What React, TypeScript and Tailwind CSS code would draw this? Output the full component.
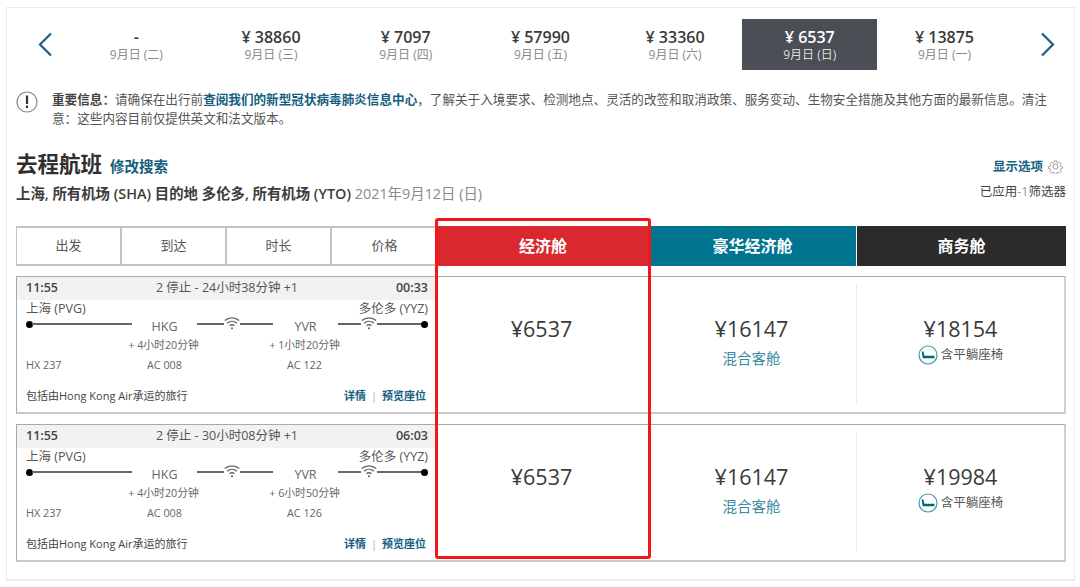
import React from "react";

const FONT = "font-['Open_Sans','Noto_Sans_CJK_SC',sans-serif]";

const dates = [
  { price: "-", day: "9月日 (二)" },
  { price: "¥ 38860", day: "9月日 (三)" },
  { price: "¥ 7097", day: "9月日 (四)" },
  { price: "¥ 57990", day: "9月日 (五)" },
  { price: "¥ 33360", day: "9月日 (六)" },
  { price: "¥ 6537", day: "9月日 (日)", active: true },
  { price: "¥ 13875", day: "9月日 (一)" },
];

const flights = [
  { summary: "2 停止 - 24小时38分钟 +1", arrive: "00:33", layover: "+ 1小时20分钟", last: "AC 122", business: "¥18154" },
  { summary: "2 停止 - 30小时08分钟 +1", arrive: "06:03", layover: "+ 6小时50分钟", last: "AC 126", business: "¥19984" },
];

function Chevron({ right }: { right?: boolean }) {
  return (
    <svg width="15" height="25" viewBox="0 0 15 25" fill="none" stroke="#1c5f80" strokeWidth="2.2">
      <path d={right ? "M2 1.500 13 12.500 2 23.500" : "M13 1.500 2 12.500 13 23.500"} />
    </svg>
  );
}

function Wifi() {
  return (
    <svg width="16" height="14" viewBox="0 0 16 14" fill="none" stroke="#666" strokeWidth="1.4" className="shrink-0 mb-[3px]">
      <path d="M.8 4.600C4.800 1 11.200 1 15.200 4.600" />
      <path d="M3.200 7.100c2.800-2.300 6.800-2.300 9.600 0" />
      <path d="M5.600 9.600c1.400-1 3.400-1 4.800 0" />
      <circle cx="8" cy="12.300" r="1.100" fill="#666" stroke="none" />
    </svg>
  );
}

function Line({ className = "" }: { className?: string }) {
  return <div className={`h-[2px] bg-[#666] ${className}`} />;
}

function FlatBed() {
  return (
    <svg width="20" height="20" viewBox="0 0 20 20" className="shrink-0">
      <circle cx="10" cy="10" r="9" fill="none" stroke="#3f97ad" strokeWidth="1.2" />
      <path d="M3.600 6.500h1.800l1 4.300h10v2.400H4.800z" fill="#00657d" />
    </svg>
  );
}

function FlightRow({ flight }: { flight: (typeof flights)[number] }) {
  return (
    <div className="flex h-[138px] border border-[#a9a9a9] border-b-2 border-b-[#c9c9c9] border-r-2 border-r-[#d0d0d0]">
      <div className="w-[420px] shrink-0 flex flex-col text-[#555]">
        <div className="h-[23px] bg-[#f2f2f2] px-[9px] flex items-center justify-between text-[12.5px] text-[#444]">
          <span className="font-semibold">11:55</span>
          <span className="text-[#555]">{flight.summary}</span>
          <span className="font-semibold">{flight.arrive}</span>
        </div>
        <div className="h-[15px] px-[9px] flex justify-between text-[12.5px] leading-[18px]">
          <span>上海 (PVG)</span>
          <span>多伦多 (YYZ)</span>
        </div>
        <div className="pl-[9px] pr-[9px] grid grid-cols-[106px_65px_76px_65px_1fr] text-[10.8px] text-[#666]">
          <div className="flex items-center h-[18px]">
            <div className="w-[7px] h-[7px] rounded-full bg-black" />
            <Line className="flex-1 -ml-[1px]" />
          </div>
          <div className="text-center text-[12.5px] leading-[20px] h-[18px] pt-[2px]">HKG</div>
          <div className="flex items-center h-[18px]">
            <Line className="flex-1" />
            <Wifi />
            <Line className="w-[33px]" />
          </div>
          <div className="text-center text-[12.5px] leading-[20px] h-[18px] pt-[2px]">YVR</div>
          <div className="flex items-center h-[18px]">
            <Line className="w-[23px]" />
            <Wifi />
            <Line className="flex-1" />
            <div className="w-[7px] h-[7px] rounded-full bg-black -ml-[1px]" />
          </div>
          <div className="col-start-2 whitespace-nowrap flex justify-center h-[19px] items-end leading-[15px] pr-[2px]">+ 4小时20分钟</div>
          <div className="col-start-4 whitespace-nowrap flex justify-center h-[19px] items-end leading-[15px] pr-[2px]">{flight.layover}</div>
          <div className="col-start-1 h-[20px] flex items-end leading-[15px]">HX 237</div>
          <div className="flex justify-center h-[20px] items-end leading-[15px]">AC 008</div>
          <div className="col-start-4 flex justify-center h-[20px] items-end leading-[15px] pr-[2px]">{flight.last}</div>
        </div>
        <div className="mt-auto mb-[9px] px-[9px] flex justify-between items-center text-[11px] leading-[14px]">
          <span className="text-[#444]">包括由Hong Kong Air承运的旅行</span>
          <span className="mr-[2px] flex items-center font-semibold text-[#14607f]">
            详情
            <span className="mx-[5px] font-normal text-[#aaa]">|</span>
            预览座位
          </span>
        </div>
      </div>
      <div className="w-[213px] shrink-0 pt-[39px] pr-[4px] text-center text-[21.5px] leading-[26px] text-[#3a3a3a]">¥6537</div>
      <div className="w-[207px] shrink-0 my-[8px] pt-[31px] pr-[3px] border-r border-dotted border-r-[#d8d8d8] text-center">
        <div className="text-[21.5px] leading-[26px] text-[#3a3a3a]">¥16147</div>
        <div className="mt-[7px] text-[14.5px] leading-[20px] text-[#3a8ba3]">混合客舱</div>
      </div>
      <div className="flex-1 pt-[39px] text-center">
        <div className="text-[21.5px] leading-[26px] text-[#3a3a3a]">{flight.business}</div>
        <div className="mt-[3px] flex items-center justify-center gap-[3px] text-[12.5px] leading-[20px] text-[#555]">
          <FlatBed />
          含平躺座椅
        </div>
      </div>
    </div>
  );
}

export default function App() {
  return (
    <div className={`${FONT} relative w-[1080px] h-[587px] bg-white overflow-hidden pt-[7px] pl-[6px]`}>
      <div className="w-[1069px] h-[574px] border border-[#ececec] border-b-2 pl-[9px] pr-[8px] pt-[11px]">
        {/* date strip */}
        <div className="flex items-center h-[51px]">
          <div className="w-[53px] pl-[22px] flex"><Chevron /></div>
          {dates.map((d) => (
            <div
              key={d.day}
              className={`w-[134.7px] h-[51px] flex flex-col items-center justify-center ${d.active ? "bg-[#4a4e55] text-white" : "text-[#3a3a3a]"}`}
            >
              <div className="text-[16px] leading-[19px] font-semibold">{d.price}</div>
              <div className={`text-[12px] leading-[15px] ${d.active ? "text-[#dddddd]" : "text-[#8a8a8a]"}`}>{d.day}</div>
            </div>
          ))}
          <div className="ml-[28px]"><Chevron right /></div>
        </div>

        {/* notice */}
        <div className="mt-[20px] flex">
          <svg width="22" height="22" viewBox="0 0 22 22" className="shrink-0 mt-[1px]">
            <circle cx="11" cy="11" r="10" fill="none" stroke="#8a8a8a" strokeWidth="1.2" />
            <rect x="9.900" y="4.500" width="2.200" height="8.500" fill="#333" />
            <rect x="9.900" y="14.600" width="2.200" height="2.400" fill="#333" />
          </svg>
          <p className="ml-[14px] w-[1000px] text-[12.6px] leading-[19px] text-[#555] [text-spacing-trim:space-all]">
            <span className="font-semibold text-[#444]">重要信息：</span>请确保在出行前
            <span className="font-semibold text-[#14607f]">查阅我们的新型冠状病毒肺炎信息中心</span>
            ，了解关于入境要求、检测地点、灵活的改签和取消政策、服务变动、生物安全措施及其他方面的最新信息。清注
            <br />
            意：这些内容目前仅提供英文和法文版本。
          </p>
        </div>

        {/* heading */}
        <div className="mt-[20px] flex justify-between">
          <div>
            <div className="flex items-baseline h-[34px]">
              <h1 className="text-[21.5px] leading-[32px] font-bold text-[#2f2f2f]">去程航班</h1>
              <a className="ml-[8px] text-[14.5px] font-semibold text-[#14607f]">修改搜索</a>
            </div>
            <div className="text-[14.4px] leading-[24px] text-[#8a8a8a]">
              <span className="font-semibold text-[#3c3c3c]">上海, 所有机场 (SHA) 目的地 多伦多, 所有机场 (YTO)</span> 2021年9月12日 (日)
            </div>
          </div>
          <div className="flex flex-col items-end pt-[10px]">
            <div className="flex items-center h-[18px] mr-[3px] text-[12.5px] font-semibold text-[#14607f]">
              显示选项
              <svg width="15" height="15" viewBox="0 0 24 24" fill="none" stroke="#8c8c8c" strokeWidth="1.4" className="ml-[5px] mb-[2px]">
                <circle cx="12" cy="12" r="4" />
                <path d="M10 2h4l.6 3 2.300 1 2.600-1.700 2.800 2.800-1.700 2.600 1 2.300 3 .6v2.800l-3 .6-1 2.300 1.700 2.600-2.800 2.800-2.600-1.700-2.300 1-.6 3h-4l-.6-3-2.300-1-2.600 1.700-2.800-2.800 1.700-2.600-1-2.300-3-.6v-2.800l3-.6 1-2.300L1.700 7.100l2.800-2.800 2.600 1.700 2.300-1z" transform="translate(1.200 1.200) scale(.9)" />
              </svg>
            </div>
            <div className="mt-[7px] text-[12.5px] leading-[18px] text-[#444]">已应用<span className="text-[#999]">-1</span>筛选器</div>
          </div>
        </div>

        {/* cabin header */}
        <div className="mt-[20px] flex h-[40px]">
          <div className="w-[421px] shrink-0 grid grid-cols-4 border-y-2 border-[#c4c4c4] border-l text-[13px] text-[#555]">
            {["出发", "到达", "时长", "价格"].map((label, i) => (
              <div key={label} className={`flex items-center justify-center ${i < 3 ? "border-r-2 border-[#c4c4c4]" : ""}`}>{label}</div>
            ))}
          </div>
          <div className="w-[212px] shrink-0 bg-[#d9292f] flex items-center justify-center text-[16px] font-bold text-white">经济舱</div>
          <div className="w-[208px] shrink-0 bg-[#00758f] flex items-center justify-center text-[16px] font-bold text-white border-r border-white">豪华经济舱</div>
          <div className="flex-1 bg-[#2b2b2b] flex items-center justify-center text-[16px] font-bold text-white">商务舱</div>
        </div>

        {/* flights */}
        <div className="mt-[10px] flex flex-col gap-[10px]">
          {flights.map((f) => (
            <FlightRow key={f.arrive} flight={f} />
          ))}
        </div>
      </div>

      {/* red annotation box over the economy column */}
      <div className="absolute left-[435px] top-[218px] w-[216px] h-[341px] rounded-[3px] border-[3px] border-[#f5161b]" />
    </div>
  );
}
